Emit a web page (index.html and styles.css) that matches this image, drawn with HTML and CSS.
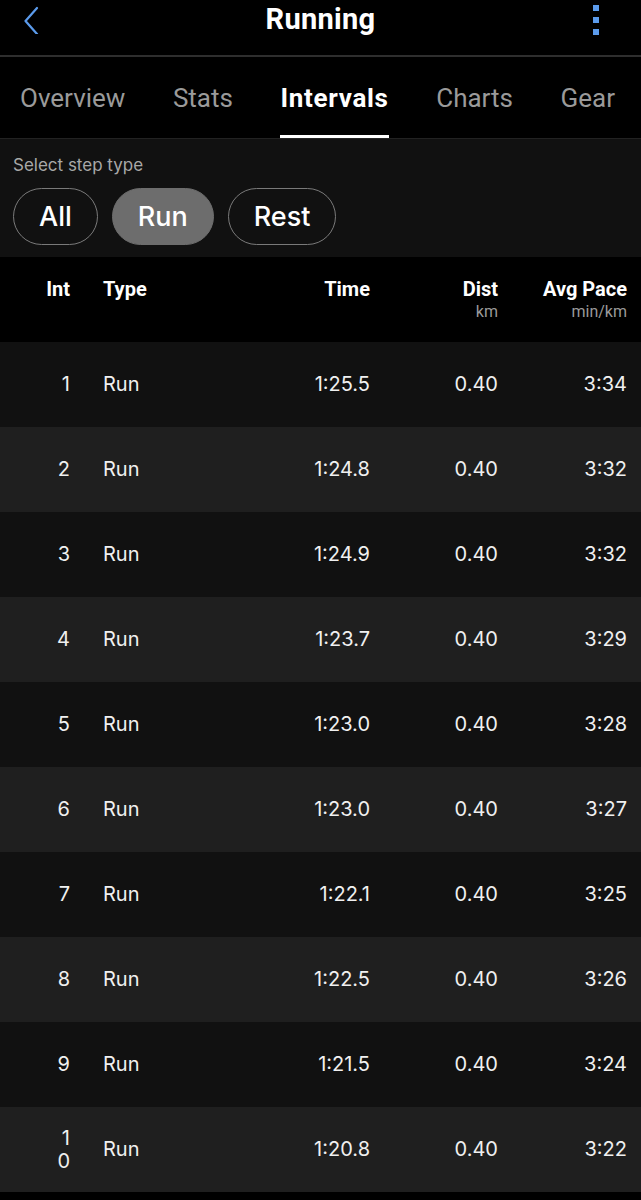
FILE: index.html
```html
<!DOCTYPE html>
<html>
<head>
<meta charset="utf-8">
<link rel="stylesheet" href="styles.css">
</head>
<body>
<div class="app">
  <header class="topbar">
    <svg class="back" width="20" height="30" viewBox="0 0 20 30"><path d="M16 4 L4.5 17 L16 30" fill="none" stroke="#5b9bec" stroke-width="2.2" stroke-linecap="round" stroke-linejoin="round"/></svg>
    <h1 class="title">Running</h1>
    <div class="more"><span></span><span></span><span></span></div>
  </header>
  <nav class="tabs">
    <span class="tab">Overview</span>
    <span class="tab">Stats</span>
    <span class="tab active">Intervals</span>
    <span class="tab">Charts</span>
    <span class="tab">Gear</span>
  </nav>
  <section class="filter">
    <div class="filter-label">Select step type</div>
    <div class="chips">
      <span class="chip">All</span>
      <span class="chip selected">Run</span>
      <span class="chip">Rest</span>
    </div>
  </section>
  <div class="table">
    <div class="row head">
      <div class="c-int">Int</div>
      <div class="c-type">Type</div>
      <div class="c-num">Time</div>
      <div class="c-num">Dist<span class="unit">km</span></div>
      <div class="c-num">Avg Pace<span class="unit">min/km</span></div>
    </div>
    <div class="row"><div class="c-int">1</div><div class="c-type">Run</div><div class="c-num">1:25.5</div><div class="c-num">0.40</div><div class="c-num">3:34</div></div>
    <div class="row"><div class="c-int">2</div><div class="c-type">Run</div><div class="c-num">1:24.8</div><div class="c-num">0.40</div><div class="c-num">3:32</div></div>
    <div class="row"><div class="c-int">3</div><div class="c-type">Run</div><div class="c-num">1:24.9</div><div class="c-num">0.40</div><div class="c-num">3:32</div></div>
    <div class="row"><div class="c-int">4</div><div class="c-type">Run</div><div class="c-num">1:23.7</div><div class="c-num">0.40</div><div class="c-num">3:29</div></div>
    <div class="row"><div class="c-int">5</div><div class="c-type">Run</div><div class="c-num">1:23.0</div><div class="c-num">0.40</div><div class="c-num">3:28</div></div>
    <div class="row"><div class="c-int">6</div><div class="c-type">Run</div><div class="c-num">1:23.0</div><div class="c-num">0.40</div><div class="c-num">3:27</div></div>
    <div class="row"><div class="c-int">7</div><div class="c-type">Run</div><div class="c-num">1:22.1</div><div class="c-num">0.40</div><div class="c-num">3:25</div></div>
    <div class="row"><div class="c-int">8</div><div class="c-type">Run</div><div class="c-num">1:22.5</div><div class="c-num">0.40</div><div class="c-num">3:26</div></div>
    <div class="row"><div class="c-int">9</div><div class="c-type">Run</div><div class="c-num">1:21.5</div><div class="c-num">0.40</div><div class="c-num">3:24</div></div>
    <div class="row"><div class="c-int">10</div><div class="c-type">Run</div><div class="c-num">1:20.8</div><div class="c-num">0.40</div><div class="c-num">3:22</div></div>
  </div>
</div>
</body>
</html>
```
FILE: styles.css
```css
html, body {
  margin: 0;
  padding: 0;
  background: #000;
}
body {
  font-family: Inter, "Liberation Sans", sans-serif;
  color: #f2f2f2;
}
.app {
  width: 641px;
  min-height: 1200px;
  background: #000;
}
.topbar {
  height: 55px;
  display: flex;
  align-items: center;
  justify-content: space-between;
  padding: 0 42px 0 21px;
  border-bottom: 2px solid #2e2e2e;
  position: relative;
}
.back {
  display: block;
  margin-top: -17px;
}
.title {
  margin: 0;
  font-family: Roboto, sans-serif;
  font-weight: 700;
  font-size: 29px;
  line-height: 36px;
  letter-spacing: 0.3px;
  color: #fff;
  position: absolute;
  left: 0;
  right: 0;
  top: 1px;
  text-align: center;
  pointer-events: none;
}
.more {
  display: flex;
  flex-direction: column;
  gap: 6px;
  margin-top: -15px;
}
.more span {
  display: block;
  width: 6px;
  height: 6px;
  background: #5b9bec;
}
.tabs {
  height: 81px;
  display: flex;
  align-items: stretch;
  justify-content: space-between;
  padding: 0 26px 0 20px;
  border-bottom: 1px solid #222;
}
.tab {
  font-family: Roboto, sans-serif;
  font-size: 26px;
  color: #9a9a9a;
  display: flex;
  align-items: center;
  border-bottom: 3px solid transparent;
  padding-top: 3px;
}
.tab.active {
  color: #fff;
  font-weight: 700;
  letter-spacing: 0.7px;
  border-bottom-color: #fff;
}
.filter {
  background: #111;
  padding: 16px 13px 12px;
}
.filter-label {
  font-size: 17px;
  color: #a8a8a8;
  line-height: 20px;
}
.chips {
  display: flex;
  gap: 14px;
  margin-top: 13px;
}
.chip {
  box-sizing: border-box;
  border: 1.5px solid #7a7a7a;
  border-radius: 29px;
  padding: 0 25px;
  display: flex;
  align-items: center;
  font-size: 27px;
  font-weight: 500;
  color: #fff;
  height: 57px;
}
.chip.selected {
  background: #6d6d6d;
  border-color: #6d6d6d;
}
.table {
  background: #000;
}
.row {
  display: grid;
  grid-template-columns: 14px 1fr 120px 128px 129px;
  padding: 0 14px 0 56px;
  height: 85px;
  align-items: center;
  font-size: 20px;
  line-height: 23px;
  color: #f0f0f0;
}
.row:nth-child(2n) {
  background: #111;
}
.row:nth-child(2n+1) {
  background: #1f1f1f;
}
.row.head {
  background: #000;
  align-items: start;
  padding-top: 21px;
  box-sizing: border-box;
  font-family: Roboto, sans-serif;
  font-weight: 700;
  font-size: 20px;
  color: #fff;
}
.c-int {
  text-align: right;
  word-break: break-all;
  direction: rtl;
}
.row.head .c-int {
  white-space: nowrap;
}
.c-type {
  padding-left: 33px;
}
.c-num {
  text-align: right;
}
.unit {
  display: block;
  font-weight: 400;
  font-size: 16px;
  line-height: 20px;
  color: #9a9a9a;
  margin-top: 1px;
  font-family: Roboto, sans-serif;
}
```
